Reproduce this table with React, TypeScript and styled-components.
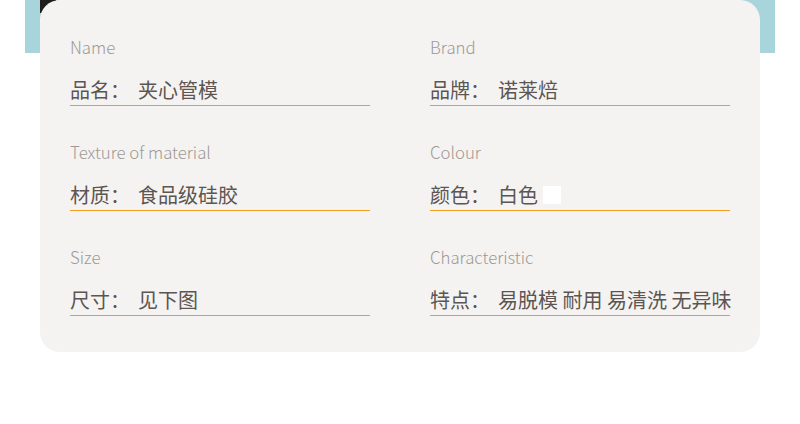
import React from "react";
import styled, { createGlobalStyle } from "styled-components";

const Global = createGlobalStyle`
  html, body { margin: 0; padding: 0; background: #ffffff; }
  body { font-family: "Noto Sans CJK SC", "Noto Sans", sans-serif; }
`;

const Page = styled.div`
  position: relative;
  width: 800px;
  height: 424px;
  padding: 0 40px;
  box-sizing: border-box;
  overflow: hidden;
`;

const Backdrop = styled.div`
  position: absolute;
  top: 0;
  left: 25px;
  right: 25px;
  height: 53px;
  background: #a8d5db;
`;

const DarkPiece = styled.div`
  position: absolute;
  top: 0;
  left: 15px;
  width: 16px;
  height: 13px;
  background: #1f1d1c;
`;

const Card = styled.div`
  position: relative;
  background: #f4f3f1;
  border-radius: 20px;
  padding: 1px 30px 36px;
  display: grid;
  grid-template-columns: 300px 300px;
  column-gap: 60px;
`;

const Field = styled.div`
  display: flex;
  flex-direction: column;
  padding-top: 35px;
`;

const Label = styled.div`
  font-family: "Noto Sans CJK SC", "Noto Sans", sans-serif;
  font-size: 16.8px;
  font-weight: 300;
  line-height: 22px;
  color: #9d9996;
`;

const ValueRow = styled.div`
  margin-top: 19px;
  height: 28px;
  display: flex;
  align-items: flex-start;
  border-bottom: 1px solid #f29c22;
  font-family: "Noto Sans CJK SC", sans-serif;
  font-size: 20px;
  line-height: 26px;
  color: #5c5552;
  white-space: nowrap;
`;

const Key = styled.span`
  width: 68px;
  flex: none;
`;

const Val = styled.span``;

const Swatch = styled.span<{ $color: string }>`
  width: 18px;
  height: 18px;
  margin-left: 5px;
  margin-top: 4px;
  background: ${(p) => p.$color};
`;

type Item = { en: string; key: string; value: string; swatch?: string };

const items: Item[] = [
  { en: "Name", key: "品名：", value: "夹心管模" },
  { en: "Brand", key: "品牌：", value: "诺莱焙" },
  { en: "Texture of material", key: "材质：", value: "食品级硅胶" },
  { en: "Colour", key: "颜色：", value: "白色", swatch: "#ffffff" },
  { en: "Size", key: "尺寸：", value: "见下图" },
  { en: "Characteristic", key: "特点：", value: "易脱模 耐用 易清洗 无异味" },
];

export default function App() {
  return (
    <Page>
      <Global />
      <Backdrop>
        <DarkPiece />
      </Backdrop>
      <Card>
        {items.map((it) => (
          <Field key={it.en}>
            <Label>{it.en}</Label>
            <ValueRow>
              <Key>{it.key}</Key>
              <Val>{it.value}</Val>
              {it.swatch && <Swatch $color={it.swatch} />}
            </ValueRow>
          </Field>
        ))}
      </Card>
    </Page>
  );
}
